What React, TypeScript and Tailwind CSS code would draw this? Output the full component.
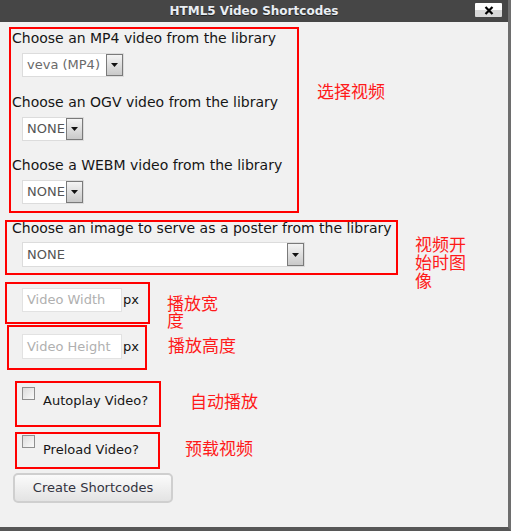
import React from "react";

const Arrow = () => (
  <svg width="7" height="4" viewBox="0 0 7 4">
    <path d="M0 0H7L3.5 4Z" fill="#111" />
  </svg>
);

function Select({ value, w, h, text }: { value: string; w: string; h: string; text: string }) {
  return (
    <div className={`flex items-stretch bg-white border border-[#dcdcdc] ${w} ${h}`}>
      <div className={`flex-1 flex items-center pl-[4px] text-[13px] ${text} whitespace-nowrap`}>{value}</div>
      <div className="w-[17px] flex items-center justify-center border border-[#7a7a7a] bg-gradient-to-b from-[#f4f4f4] to-[#c9c9c9]">
        <Arrow />
      </div>
    </div>
  );
}

function Checkbox() {
  return <div className="w-[13px] h-[13px] border border-[#8f8f8f] bg-gradient-to-br from-[#dcdcdc] to-[#fafafa] shrink-0" />;
}

export default function App() {
  const ann = "absolute text-[17px] text-[#ff1a1a] font-['Noto_Sans_CJK_SC',sans-serif]";
  const lbl = "text-[14px] leading-[16px] whitespace-nowrap";
  return (
    <div className="relative w-[511px] h-[531px] bg-[#f1f1f1] border-r-[3px] border-r-[#6e6e6e] border-b-[4px] border-b-[#575757] overflow-hidden font-['DejaVu_Sans',sans-serif] text-[13px] text-[#161616]">
      <div className="relative h-[22px] bg-[#464646] flex items-center justify-center">
        <span className="text-[12px] font-bold text-[#e9eef3] [text-shadow:0_1px_0_#222]">HTML5 Video Shortcodes</span>
        <div className="absolute left-[475px] top-[3px] w-[27px] h-[14px] rounded-[1px] bg-gradient-to-b from-white from-50% to-[#d8d8d8] to-50% flex items-center justify-center">
          <svg width="10" height="9" viewBox="0 0 10 9">
            <path d="M1.5 1L8.5 8M8.5 1L1.5 8" stroke="#000" strokeWidth="2.2" />
          </svg>
        </div>
      </div>

      <div className="flex flex-col">
        <div className="mt-[5px] ml-[9px] w-[290px] h-[186px] border-2 border-[#ff0000] flex flex-col items-start">
          <div className={`pl-[1px] pt-[1px] ${lbl}`}>Choose an MP4 video from the library</div>
          <div className="mt-[7px] ml-[11px]">
            <Select value="veva (MP4)" w="w-[102px]" h="h-[24px]" text="text-[#6a6a6a]" />
          </div>
          <div className={`mt-[17px] pl-[1px] ${lbl}`}>Choose an OGV video from the library</div>
          <div className="mt-[7px] ml-[11px]">
            <Select value="NONE" w="w-[62px]" h="h-[24px]" text="text-[#555]" />
          </div>
          <div className={`mt-[16px] pl-[1px] ${lbl}`}>Choose a WEBM video from the library</div>
          <div className="mt-[7px] ml-[11px]">
            <Select value="NONE" w="w-[62px]" h="h-[24px]" text="text-[#555]" />
          </div>
        </div>

        <div className="mt-[7px] ml-[5px] w-[393px] h-[55px] border-2 border-[#ff0000] flex flex-col items-start">
          <div className="pl-[5px] text-[14px] leading-[13px] whitespace-nowrap">Choose an image to serve as a poster from the library</div>
          <div className="mt-[7px] ml-[15px]">
            <Select value="NONE" w="w-[283px]" h="h-[25px]" text="text-[#555]" />
          </div>
        </div>

        <div className="mt-[7px] ml-[5px] w-[145px] h-[42px] border-2 border-[#ff0000] flex items-start">
          <div className="mt-[4px] ml-[15px] flex items-center">
            <div className="w-[100px] h-[24px] bg-white border border-[#e2e2e2] flex items-center pl-[4px] text-[#b0b0b0] whitespace-nowrap">Video Width</div>
            <span className="ml-[1px] text-[#111]">px</span>
          </div>
        </div>

        <div className="mt-[1px] ml-[7px] w-[140px] h-[45px] border-2 border-[#ff0000] flex items-start">
          <div className="mt-[7px] ml-[13px] flex items-center">
            <div className="w-[100px] h-[25px] bg-white border border-[#e2e2e2] flex items-center pl-[4px] text-[#b0b0b0] whitespace-nowrap">Video Height</div>
            <span className="ml-[1px] text-[#111]">px</span>
          </div>
        </div>

        <div className="mt-[11px] ml-[15px] w-[146px] h-[46px] border-2 border-[#ff0000] flex items-start">
          <div className="mt-[4px] ml-[5px]"><Checkbox /></div>
          <div className="mt-[10px] ml-[8px] leading-[16px] whitespace-nowrap">Autoplay Video?</div>
        </div>

        <div className="mt-[5px] ml-[15px] w-[145px] h-[37px] border-2 border-[#ff0000] flex items-start">
          <div className="mt-[1px] ml-[5px]"><Checkbox /></div>
          <div className="mt-[8px] ml-[8px] leading-[16px] whitespace-nowrap">Preload Video?</div>
        </div>

        <button className="mt-[4px] ml-[13px] w-[160px] h-[30px] rounded-[5px] border-2 border-[#cfcfcf] bg-gradient-to-b from-[#fbfbfb] to-[#e3e3e3] text-[13px] text-[#333340] font-['DejaVu_Sans',sans-serif] flex items-center justify-center">
          Create Shortcodes
        </button>
      </div>

      <div className={`${ann} left-[317px] top-[82px] leading-[17px] whitespace-nowrap`}>选择视频</div>
      <div className={`${ann} left-[415px] top-[235px] w-[53px] leading-[18px]`}>视频开始时图像</div>
      <div className={`${ann} left-[167px] top-[294px] w-[53px] leading-[17px]`}>播放宽度</div>
      <div className={`${ann} left-[168px] top-[336px] leading-[17px] whitespace-nowrap`}>播放高度</div>
      <div className={`${ann} left-[190px] top-[392px] leading-[17px] whitespace-nowrap`}>自动播放</div>
      <div className={`${ann} left-[185px] top-[439px] leading-[17px] whitespace-nowrap`}>预载视频</div>
    </div>
  );
}
